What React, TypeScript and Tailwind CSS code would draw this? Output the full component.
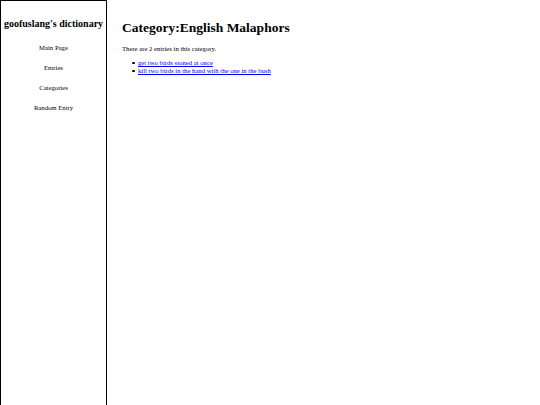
export default function App() {
  const items = ["get two birds stoned at once", "kill two birds in the hand with the one in the bush"];
  return (
    <div className="flex min-h-[405px] bg-white text-black" style={{ fontFamily: '"Liberation Serif", "Times New Roman", serif' }}>
      <div className="w-[107px] h-[420px] shrink-0 border border-black flex flex-col items-center">
        <div className="mt-[16px] text-[10px] font-bold leading-[14px] whitespace-nowrap">goofuslang's dictionary</div>
        <div className="mt-[12.5px] flex flex-col items-center gap-[12.2px] text-[6.7px] leading-[8px]">
          <div>Main Page</div>
          <div>Entries</div>
          <div>Categories</div>
          <div>Random Entry</div>
        </div>
      </div>
      <div className="pl-[15px] pt-[19px]">
        <h1 className="text-[13.5px] font-bold leading-[18px]">Category:English Malaphors</h1>
        <p className="mt-[8px] text-[6.7px] leading-[8px]">There are 2 entries in this category.</p>
        <ul className="mt-[6px] pl-[10px] text-[6.7px] leading-[8px]">
          {items.map((t) => (
            <li key={t} className="flex items-center">
              <span className="w-[2.5px] h-[2.5px] rounded-full bg-black shrink-0" />
              <a href="#" className="ml-[3.5px] text-[#0000ee] underline">{t}</a>
            </li>
          ))}
        </ul>
      </div>
    </div>
  );
}
